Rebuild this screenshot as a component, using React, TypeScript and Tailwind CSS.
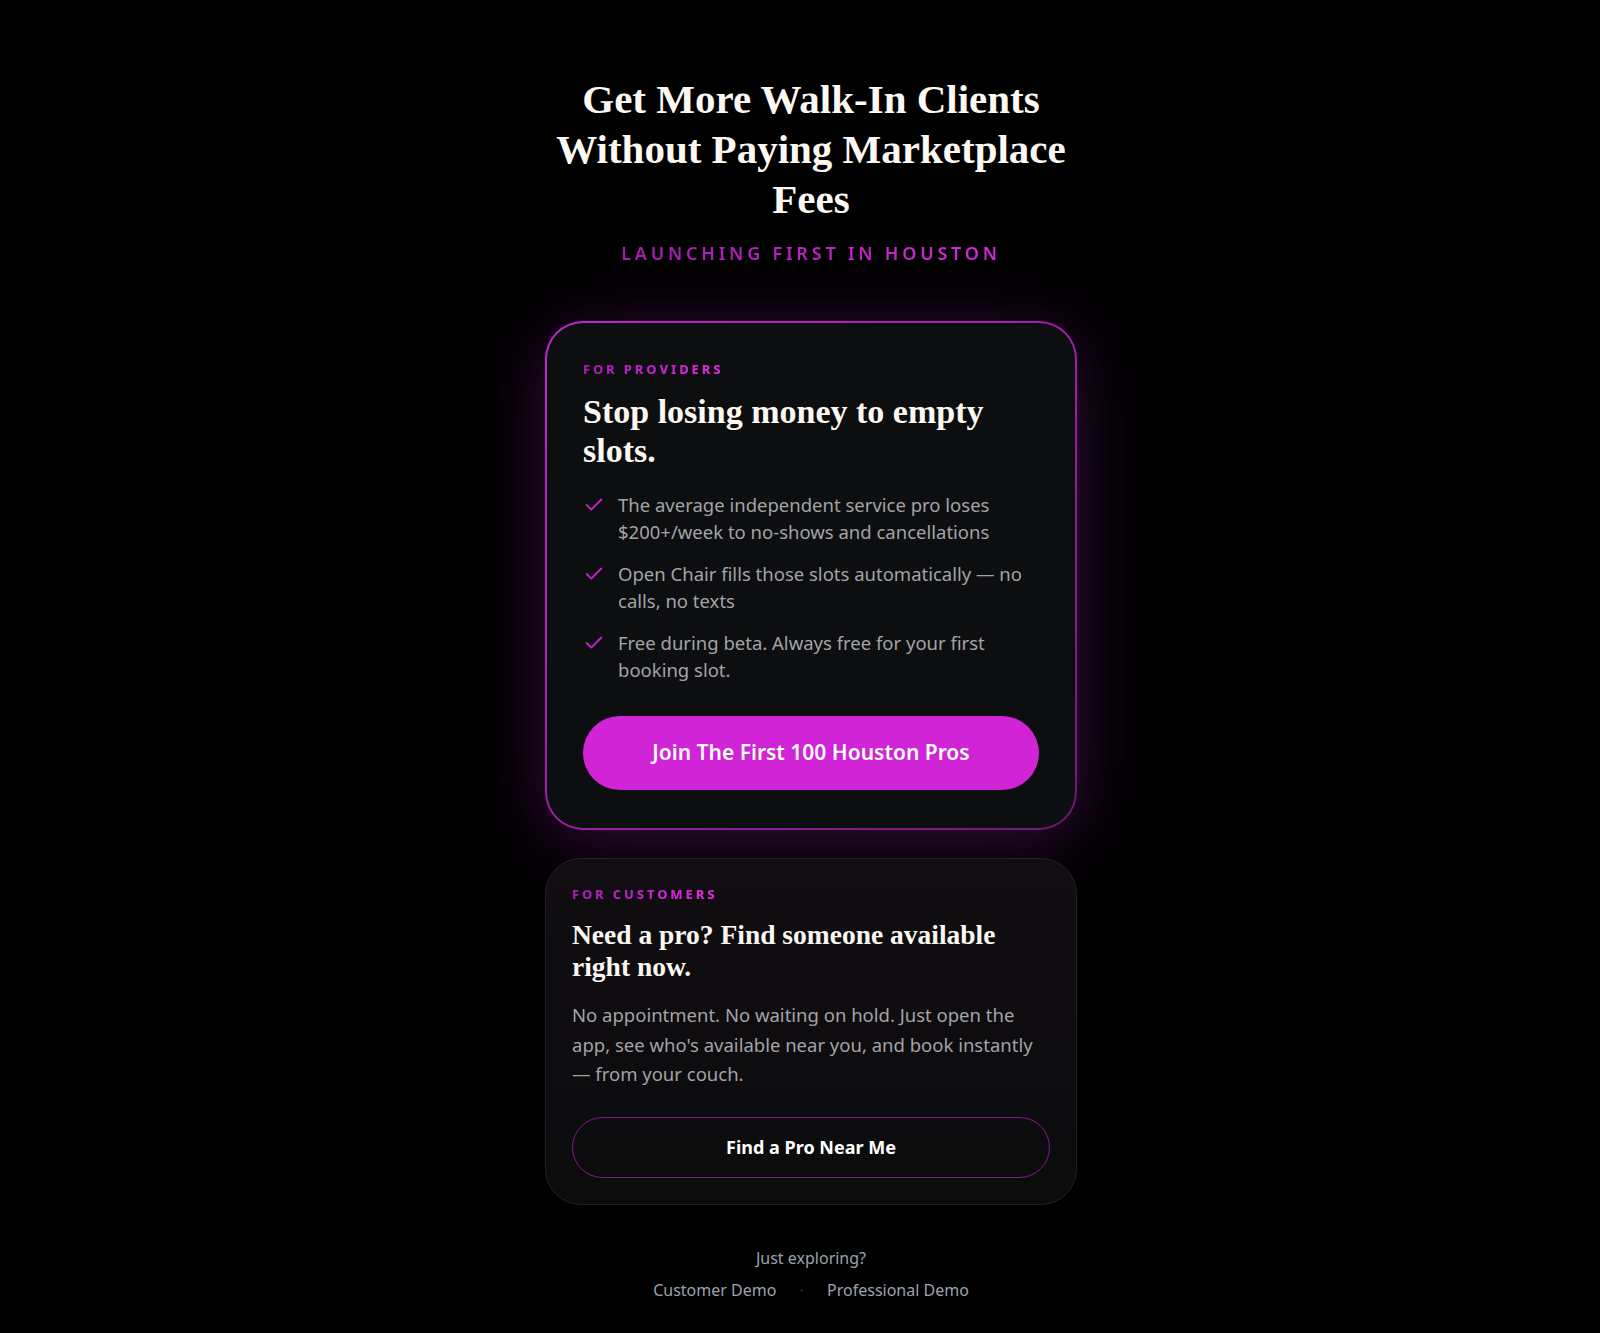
import { Check } from 'lucide-react'

const SERIF = { fontFamily: '"Liberation Serif", "DejaVu Serif", serif' }

const providerPoints = [
  'The average independent service pro loses $200+/week to no-shows and cancellations',
  'Open Chair fills those slots automatically — no calls, no texts',
  'Free during beta. Always free for your first booking slot.',
]

export default function App() {
  return (
    <div
      className="min-h-screen bg-black text-white"
      style={{ fontFamily: '"Noto Sans", "Open Sans", sans-serif' }}
    >
      <div className="flex flex-col items-center pl-[22px] pt-[74px] pb-10">
        {/* Hero */}
        <h1
          className="w-[532px] text-center text-[41px] font-bold leading-[50px] text-[#fdf8f2]"
          style={SERIF}
        >
          Get More Walk-In Clients Without Paying Marketplace Fees
        </h1>
        <p className="mt-[17px] bg-gradient-to-r from-[#a21caf] to-[#d926d9] bg-clip-text text-[18px] font-semibold uppercase leading-6 tracking-[0.21em] text-transparent">
          Launching First in Houston
        </p>

        {/* Providers card */}
        <div className="mt-[56px] w-[532px] rounded-[38px] bg-gradient-to-br from-[#c026d3] via-[#a21caf] to-[#6b1a72] p-[2px] shadow-[0_10px_70px_rgba(192,38,211,0.28)]">
          <div className="rounded-[36px] bg-[#0d0e10] px-9 pb-[38px] pt-[33px]">
            <p className="inline-block bg-gradient-to-r from-[#a21caf] to-[#e02ae0] bg-clip-text text-[13px] font-extrabold uppercase leading-[18px] tracking-[0.22em] text-transparent">
              For Providers
            </p>
            <h2
              className="mt-[12px] text-[34px] font-bold leading-[39px] text-[#fdf8f2]"
              style={SERIF}
            >
              Stop losing money to empty slots.
            </h2>
            <ul className="mt-[22px] flex flex-col gap-4">
              {providerPoints.map((point) => (
                <li key={point} className="flex items-start gap-[13px]">
                  <Check size={22} strokeWidth={2} className="mt-[2px] shrink-0 text-[#c81ed4]" />
                  <span className="text-[18.5px] leading-[26.5px] text-[#a3a3a8]">{point}</span>
                </li>
              ))}
            </ul>
            <button className="mt-[33px] flex h-[74px] w-full items-center justify-center rounded-full bg-[#d024d6] text-[21px] font-semibold text-white">
              Join The First 100 Houston Pros
            </button>
          </div>
        </div>

        {/* Customers card */}
        <div className="mt-[28px] w-[532px] rounded-[36px] border border-[#232126] bg-gradient-to-b from-[#110d12] to-[#0b0b0c] px-[26px] pb-[26px] pt-[22px]">
          <p className="inline-block bg-gradient-to-r from-[#a21caf] to-[#e02ae0] bg-clip-text text-[13px] font-extrabold uppercase leading-[18px] tracking-[0.22em] text-transparent">
            For Customers
          </p>
          <h2
            className="mt-[14px] text-[27.5px] font-bold leading-[32px] text-[#fdf8f2]"
            style={SERIF}
          >
            Need a pro? Find someone available right now.
          </h2>
          <p className="mt-[17px] text-[18.5px] leading-[29.5px] text-[#a3a3a8]">
            No appointment. No waiting on hold. Just open the app, see who's available near you, and book instantly — from your couch.
          </p>
          <button className="mt-[28px] flex h-[61px] w-full items-center justify-center rounded-full border-[1.5px] border-[#86198f] bg-transparent text-[18px] font-bold text-white">
            Find a Pro Near Me
          </button>
        </div>

        {/* Footer */}
        <p className="mt-[42px] text-[16px] leading-[22px] text-[#9ca3af]">Just exploring?</p>
        <div className="mt-[10px] flex items-center gap-6 text-[16px] leading-[22px] text-[#9ca3af]">
          <a href="#">Customer Demo</a>
          <span className="text-[10px] text-[#6b7280]">·</span>
          <a href="#">Professional Demo</a>
        </div>
      </div>
    </div>
  )
}
